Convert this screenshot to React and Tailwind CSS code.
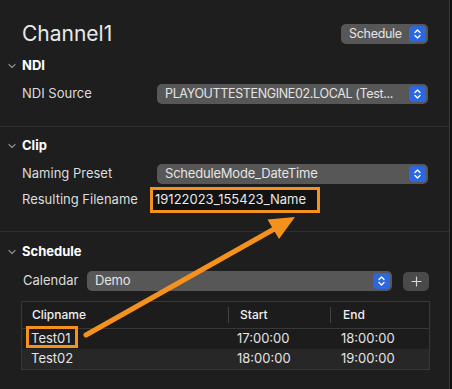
import React from "react";

const FONT = { fontFamily: "Inter, 'Noto Sans', 'Liberation Sans', sans-serif" };

const Chevron = () => (
  <svg width="8" height="6" viewBox="0 0 8 6" className="absolute left-[8px]">
    <path d="M1 1.5 L4 4.5 L7 1.5" fill="none" stroke="#8a8a8a" strokeWidth="1.2" strokeLinecap="round" strokeLinejoin="round" />
  </svg>
);

const Stepper = () => (
  <div className="w-[17px] h-[16px] rounded-[4px] bg-[#2c67e0] flex items-center justify-center shrink-0">
    <svg width="9" height="12" viewBox="0 0 9 12">
      <path d="M2 4.5 L4.5 2 L7 4.5" fill="none" stroke="white" strokeWidth="1.4" strokeLinecap="round" strokeLinejoin="round" />
      <path d="M2 7.5 L4.5 10 L7 7.5" fill="none" stroke="white" strokeWidth="1.4" strokeLinecap="round" strokeLinejoin="round" />
    </svg>
  </div>
);

const Popup = ({ text, className, textClass = "text-[13px] tracking-[-0.2px]" }) => (
  <div className={"h-[20px] min-w-0 rounded-[5px] bg-[#575757] flex items-center pl-[8px] pr-[2px] gap-[3px] " + className}>
    <span className={"flex-1 min-w-0 text-[#e4e4e4] whitespace-nowrap overflow-hidden " + textClass}>{text}</span>
    <Stepper />
  </div>
);

const SectionHeader = ({ title, className }) => (
  <div className={"relative h-[16px] flex items-center pl-[22px] " + className}>
    <Chevron />
    <span className="text-[13px] font-bold text-white">{title}</span>
  </div>
);

const rows = [
  { name: "Test01", start: "17:00:00", end: "18:00:00" },
  { name: "Test02", start: "18:00:00", end: "19:00:00" },
];

export default function App() {
  return (
    <div className="relative w-[452px] h-[389px] bg-[#101010] overflow-hidden" style={FONT}>
      <div className="w-[450px] h-full bg-[#1e1e1e] border-r border-[#3a3a3a] flex flex-col">
        <div className="mt-[24px] h-[20px] flex items-center justify-between pl-[22px] pr-[21px]">
          <span className="text-[21px] text-[#e8e8e8]">Channel1</span>
          <Popup text="Schedule" className="w-[87px]" textClass="text-[12.5px] tracking-[-0.3px]" />
        </div>

        <SectionHeader title="NDI" className="mt-[14px]" />
        <div className="mt-[10px] h-[20px] flex items-center pl-[22px] pr-[21px]">
          <span className="w-[135px] shrink-0 text-[13px] text-[#dcdcdc]">NDI Source</span>
          <Popup
            text="PLAYOUTTESTENGINE02.LOCAL (Test..."
            className="flex-1"
            textClass="text-[12.5px] tracking-[-0.35px]"
          />
        </div>

        <div className="mt-[22px] h-[1px] bg-[#2e2e2e]" />

        <SectionHeader title="Clip" className="mt-[11px]" />
        <div className="mt-[10px] h-[20px] flex items-center pl-[22px] pr-[21px]">
          <span className="w-[135px] shrink-0 text-[13px] text-[#dcdcdc]">Naming Preset</span>
          <Popup text="ScheduleMode_DateTime" className="flex-1" />
        </div>
        <div className="mt-[3px] h-[26px] flex items-center pl-[22px]">
          <span className="w-[128px] shrink-0 text-[13px] text-[#dcdcdc]">Resulting Filename</span>
          <div className="w-[170px] h-[26px] border-[3px] border-[#f5921e] bg-[#121212] flex items-center pl-[2px]">
            <span className="text-[13px] text-[#e8e8e8] whitespace-nowrap">19122023_155423_Name</span>
          </div>
        </div>

        <div className="mt-[18px] h-[1px] bg-[#2e2e2e]" />

        <SectionHeader title="Schedule" className="mt-[12px]" />
        <div className="mt-[11px] h-[20px] flex items-center pl-[23px] pr-[20px]">
          <span className="w-[64px] shrink-0 text-[13px] text-[#dcdcdc]">Calendar</span>
          <Popup text="Demo" className="w-[306px]" />
          <div className="ml-[11px] w-[26px] h-[19px] rounded-[5px] bg-[#4a4a4a] flex items-center justify-center">
            <svg width="11" height="11" viewBox="0 0 11 11">
              <path d="M5.5 1 V10 M1 5.5 H10" stroke="#d8d8d8" strokeWidth="1.2" strokeLinecap="round" />
            </svg>
          </div>
        </div>

        <div className="mt-[10px] ml-[21px] w-[409px] border border-[#383838] bg-[#1c1c1c]">
          <div className="h-[27px] flex items-center border-b border-[#383838] text-[12px] font-medium text-[#f0f0f0]">
            <div className="w-[206px] pl-[10px]">Clipname</div>
            <div className="w-[102px] h-[16px] border-l border-[#444] pl-[11px] flex items-center">Start</div>
            <div className="flex-1 h-[16px] border-l border-[#444] pl-[12px] flex items-center">End</div>
          </div>
          {rows.map((r, i) => (
            <div
              key={r.name}
              className={"h-[20px] flex items-center text-[13px] text-[#e4e4e4] " + (i % 2 ? "bg-[#272727]" : "")}
            >
              <div className="w-[206px] pl-[9px]">{r.name}</div>
              <div className="w-[102px] pl-[9px]">{r.start}</div>
              <div className="flex-1 pl-[11px]">{r.end}</div>
            </div>
          ))}
        </div>
      </div>

      {/* annotation overlay */}
      <div className="absolute left-[26px] top-[326px] w-[52px] h-[22px] border-[3px] border-[#f5921e]" />
      <svg className="absolute inset-0 pointer-events-none" width="452" height="389">
        <line x1="86" y1="335" x2="276" y2="228" stroke="#f5921e" strokeWidth="5" strokeLinecap="round" />
        <polygon points="295,217 267.5,219.5 279,239" fill="#f5921e" />
      </svg>
    </div>
  );
}
